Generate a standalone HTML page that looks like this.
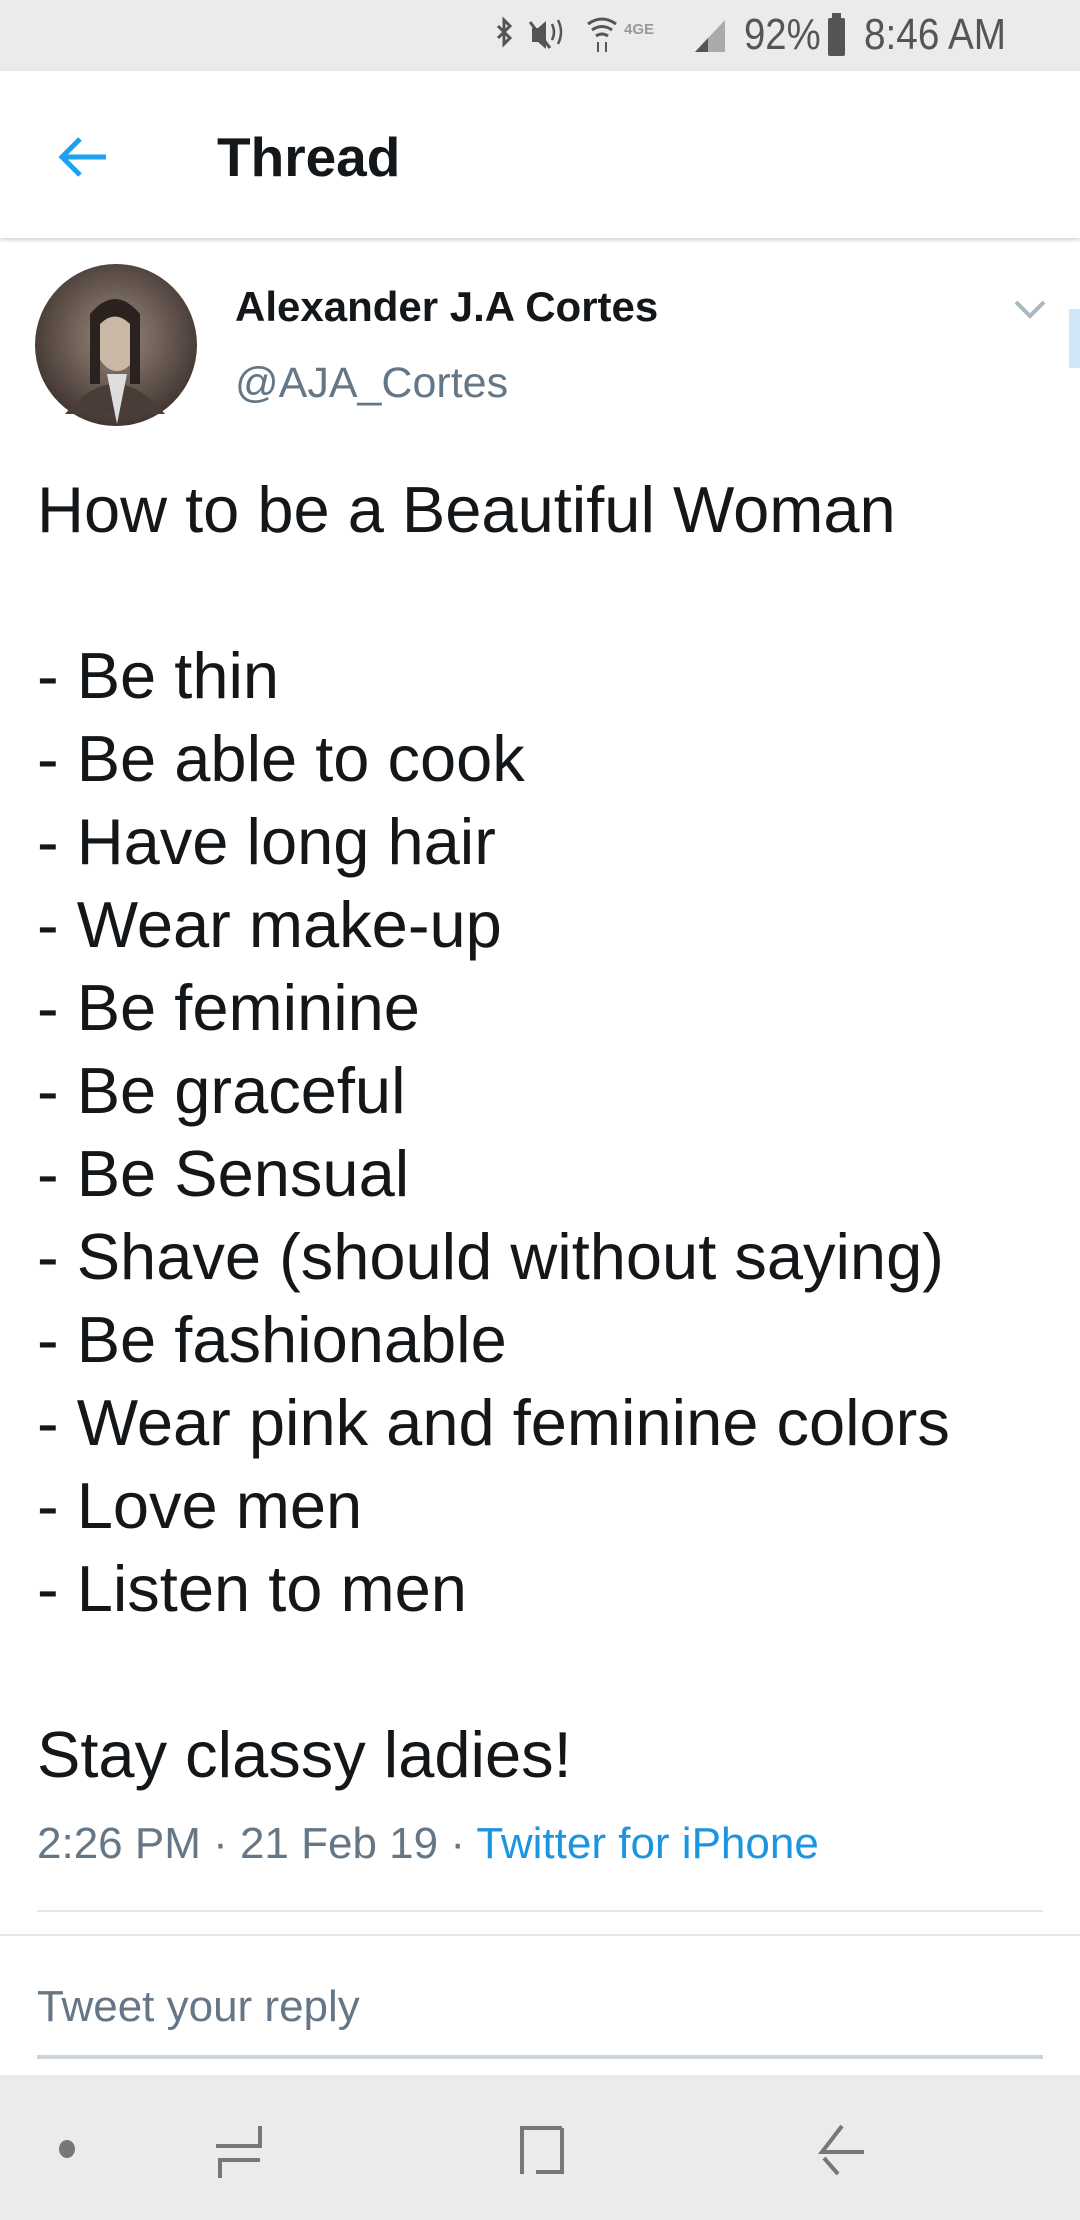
<!DOCTYPE html>
<html><head><meta charset="utf-8"><style>
*{margin:0;padding:0;box-sizing:border-box}
body{width:1080px;height:2220px;background:#fff;font-family:"Liberation Sans",sans-serif;position:relative;overflow:hidden}
.a{position:absolute;white-space:nowrap}
</style></head><body>
<div class="a" style="left:0;top:0;width:1080px;height:71px;background:#ebebeb"></div>
<svg class="a" style="left:490px;top:14px" width="240" height="46" viewBox="0 0 240 46">
 <path d="M8 12 L20 24 L14 30 L14 6 L20 12 L8 24" fill="none" stroke="#555" stroke-width="3"/>
 <path d="M42 14 h6 l8 -7 v28 l-8 -7 h-6z" fill="#555"/><path d="M40 8 L60 34" stroke="#555" stroke-width="3"/>
 <path d="M62 10 q4 8 0 16 M68 6 q6 12 0 24" fill="none" stroke="#555" stroke-width="2.5"/>
 <path d="M98 10 q14 -10 28 0 M102 16 q10 -7 20 0 M106 22 q6 -4 12 0" fill="none" stroke="#555" stroke-width="3"/>
 <path d="M108 28 v10 M116 28 v10" stroke="#555" stroke-width="2"/>
 <text x="134" y="20" font-size="15" font-weight="bold" fill="#999" font-family="Liberation Sans">4GE</text>
 <path d="M205 38 L235 6 L235 38Z" fill="#aaa"/><path d="M205 38 L218 24 L218 38Z" fill="#555"/>
</svg>
<div class="a" style="left:744px;top:10px;font-size:44px;color:#555;transform:scaleX(.87);transform-origin:left">92%</div>
<div class="a" style="left:828px;top:18px;width:17px;height:38px;background:#555;border-radius:2px"></div>
<div class="a" style="left:832px;top:13px;width:9px;height:6px;background:#555"></div>
<div class="a" style="left:864px;top:10px;font-size:44px;color:#555;transform:scaleX(.88);transform-origin:left">8:46 AM</div>

<div class="a" style="left:0;top:71px;width:1080px;height:167px;background:#fff;box-shadow:0 2px 4px rgba(0,0,0,.18)"></div>
<svg class="a" style="left:56px;top:133px" width="56" height="48" viewBox="0 0 56 48"><path d="M50 24 H8 M24 6 L6 24 L24 42" fill="none" stroke="#1da1f2" stroke-width="5"/></svg>
<div class="a" style="left:217px;top:124px;font-size:55px;font-weight:bold;color:#14171a;line-height:66px">Thread</div>

<svg class="a" style="left:35px;top:264px" width="162" height="162"><defs><radialGradient id="g" cx=".5" cy=".45" r=".6"><stop offset="0" stop-color="#9b8a7f"/><stop offset="1" stop-color="#3a2e2a"/></radialGradient></defs><circle cx="81" cy="81" r="81" fill="url(#g)"/><ellipse cx="82" cy="75" rx="22" ry="32" fill="#c9b8a6"/><path d="M55 50 q25 -30 50 0 v70 h-10 v-60 q-15 -15 -30 0 v60 h-10z" fill="#2b2220"/><path d="M30 150 q50 -60 100 0z" fill="#4a3c36"/><path d="M72 110 l10 50 l10 -50z" fill="#ddd"/></svg>
<div class="a" style="left:235px;top:283px;font-size:42px;font-weight:bold;color:#14171a">Alexander J.A Cortes</div>
<div class="a" style="left:235px;top:359px;font-size:43px;color:#657786">@AJA_Cortes</div>
<svg class="a" style="left:1013px;top:299px" width="34" height="22"><path d="M3 3 L17 17 L31 3" fill="none" stroke="#aab8c2" stroke-width="4"/></svg>
<div class="a" style="left:1069px;top:309px;width:11px;height:59px;background:#cfe6f7"></div>

<div class="a" style="left:37px;top:468px;font-size:65px;line-height:83px;color:#14171a;white-space:pre">How to be a Beautiful Woman

- Be thin
- Be able to cook
- Have long hair
- Wear make-up
- Be feminine
- Be graceful
- Be Sensual
- Shave (should without saying)
- Be fashionable
- Wear pink and feminine colors
- Love men
- Listen to men

Stay classy ladies!</div>

<div class="a" style="left:37px;top:1819px;font-size:44px;color:#657786">2:26 PM · 21 Feb 19 · <span style="color:#1b95e0">Twitter for iPhone</span></div>
<div class="a" style="left:37px;top:1910px;width:1006px;height:2px;background:#e1e8ed"></div>
<div class="a" style="left:0;top:1934px;width:1080px;height:2px;background:#e1e8ed"></div>
<div class="a" style="left:37px;top:1982px;font-size:44px;color:#657786">Tweet your reply</div>
<div class="a" style="left:37px;top:2055px;width:1006px;height:4px;background:#ccd6dd"></div>

<div class="a" style="left:0;top:2075px;width:1080px;height:145px;background:#ebebeb"></div>
<div class="a" style="left:59px;top:2140px;width:16px;height:18px;border-radius:50%;background:#777"></div>
<svg class="a" style="left:212px;top:2124px" width="56" height="54"><path d="M48 2 V22 H4 M48 36 H8 V54" fill="none" stroke="#777" stroke-width="4"/></svg>
<svg class="a" style="left:514px;top:2124px" width="56" height="54"><path d="M48 4 H8 V50 M48 4 V48 H22" fill="none" stroke="#777" stroke-width="4"/></svg>
<svg class="a" style="left:816px;top:2124px" width="56" height="54"><path d="M26 2 L6 28 H48 M8 34 L22 50" fill="none" stroke="#777" stroke-width="4"/></svg>
</body></html>
